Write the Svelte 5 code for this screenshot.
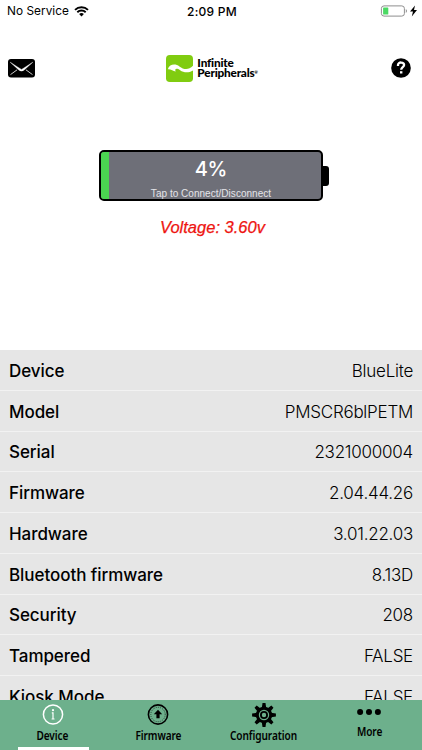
<script lang="ts">
  type Tab = "device" | "firmware" | "configuration" | "more";

  const rows = [
    { label: "Device", value: "BlueLite" },
    { label: "Model", value: "PMSCR6blPETM" },
    { label: "Serial", value: "2321000004" },
    { label: "Firmware", value: "2.04.44.26" },
    { label: "Hardware", value: "3.01.22.03" },
    { label: "Bluetooth firmware", value: "8.13D" },
    { label: "Security", value: "208" },
    { label: "Tampered", value: "FALSE" },
    { label: "Kiosk Mode", value: "FALSE" },
  ];

  const tabs: { id: Tab; label: string }[] = [
    { id: "device", label: "Device" },
    { id: "firmware", label: "Firmware" },
    { id: "configuration", label: "Configuration" },
    { id: "more", label: "More" },
  ];

  const charge = 4;
  const teeth = [0, 45, 90, 135, 180, 225, 270, 315];

  let activeTab = $state<Tab>("device");
  let connected = $state(true);
</script>

<div class="screen">
  <div class="status-bar">
    <div class="carrier">
      <span>No Service</span>
      <svg width="15" height="11" viewBox="0 0 15 11">
        <path d="M1 3.9a9.3 9.3 0 0 1 13 0M3.3 6.2a6 6 0 0 1 8.4 0" fill="none" stroke="#000" stroke-width="1.9" />
        <path d="M5.1 8.1a3.5 3.5 0 0 1 4.8 0L7.5 10.6Z" />
      </svg>
    </div>
    <div class="time">2:09 PM</div>
    <div class="power">
      <svg width="37" height="13" viewBox="0 0 37 13">
        <rect x="1.4" y=".9" width="23" height="10.2" rx="2.6" fill="#fff" stroke="#8e8e8e" />
        <rect x="3.1" y="2.5" width="5.2" height="7" rx=".6" fill="#4cd964" />
        <path d="M25.8 4q2.3 2 0 4Z" fill="#888" />
        <path d="m35 .4-5 6.1h3l-1.2 4.9 5.2-6.5h-3Z" />
      </svg>
    </div>
  </div>

  <header>
    <button class="icon-btn" aria-label="Mail">
      <svg width="27" height="19" viewBox="0 0 27 19">
        <rect width="27" height="18.5" rx="3" />
        <path d="m2.2 3.2 8.9 8q2.4 1.8 4.8 0l8.9-8-8.9 5.8-2.4 1.4-2.4-1.4Z" fill="#fff" stroke="#fff" stroke-width=".4" />
        <path d="m2.5 15.6 6.6-4.8M24.5 15.6l-6.6-4.8" fill="none" stroke="#fff" stroke-width=".8" />
      </svg>
    </button>
    <div class="brand">
      <svg width="27" height="27" viewBox="0 0 27 27">
        <rect width="27" height="27" rx="3.8" fill="#80cc10" />
        <path d="M1.8 14.2C3.6 8.8 9.6 8.6 13.4 11.4c4.3 3.1 8.9 4 13.6-.6v4.6c-4.3 2.6-9.2 2.4-12.9-.2-3.3-2.3-5.9-1.6-4.4 1.4-2.6-.8-4.7-2.6-7.9-2.4Z" fill="#fff" />
      </svg>
      <div class="brand-name">
        <span>Infinite</span>
        <span>Peripherals<small>®</small></span>
      </div>
    </div>
    <button class="icon-btn" aria-label="Help">
      <svg width="20" height="20" viewBox="0 0 20 20">
        <circle cx="10" cy="10" r="9.8" />
        <path d="M7 7.9V7c0-3.4 6.1-3.2 6.1 0 0 2.1-2.9 2.3-2.9 4.7" fill="none" stroke="#fff" stroke-width="2.3" />
        <rect x="9" y="13.2" width="2.4" height="2.3" fill="#fff" />
      </svg>
    </button>
  </header>

  <section class="battery-area">
    <button class="battery" onclick={() => (connected = !connected)}>
      <span class="battery-body">
        <span class="charge" style="width: {charge}%"></span>
        <span class="percent">{charge}%</span>
        <span class="hint">Tap to Connect/Disconnect</span>
      </span>
      <span class="battery-cap"></span>
    </button>
    <div class="voltage">Voltage: 3.60v</div>
  </section>

  <section class="details">
    {#each rows as row}
      <div class="row">
        <span class="label">{row.label}</span>
        <span class="value">{row.value}</span>
      </div>
    {/each}
  </section>

  <nav>
    {#each tabs as tab}
      <button
        class="tab {tab.id}"
        class:active={activeTab === tab.id}
        onclick={() => (activeTab = tab.id)}
      >
        {#if tab.id === "device"}
          <svg width="24" height="24" viewBox="0 0 24 24">
            <circle cx="12" cy="11.5" r="9.6" fill="none" stroke="currentColor" stroke-width="1.5" />
            <circle cx="12" cy="7.2" r="1.1" fill="currentColor" />
            <path d="M10.8 9.8H12v6M10.6 16h2.9" fill="none" stroke="currentColor" stroke-width="1.2" />
          </svg>
        {:else if tab.id === "firmware"}
          <svg width="24" height="24" viewBox="0 0 24 24">
            <circle cx="12" cy="11.5" r="9.6" fill="none" stroke="currentColor" stroke-width="1.6" />
            <circle cx="12" cy="11.5" r="7.2" fill="none" stroke="currentColor" stroke-width=".7" stroke-dasharray=".8 1.2" />
            <path d="m12 6.7 4.2 4.5h-2.6v4h-3.2v-4H7.8Z" fill="currentColor" />
          </svg>
        {:else if tab.id === "configuration"}
          <svg width="24" height="24" viewBox="0 0 24 24">
            {#each teeth as angle}
              <path d="M9.8 5 10.5.1h3L14.2 5Z" transform="rotate({angle} 12 12)" fill="currentColor" />
            {/each}
            <circle cx="12" cy="12" r="6.7" fill="none" stroke="currentColor" stroke-width="3" />
            <circle cx="12" cy="12" r="3.1" fill="none" stroke="currentColor" stroke-width="1.8" />
          </svg>
        {:else}
          <svg width="24" height="24" viewBox="0 0 24 24">
            <circle cx="3.1" cy="12" r="3" />
            <circle cx="12" cy="12" r="3" />
            <circle cx="20.9" cy="12" r="3" />
          </svg>
        {/if}
        <span class="tab-label">{tab.label}</span>
      </button>
    {/each}
  </nav>
</div>

<style>
  :global(body) {
    background: #fff;
  }

  .screen {
    display: flex;
    flex-direction: column;
    width: 422px;
    height: 750px;
    overflow: hidden;
    color: #000;
    font-family: Inter, "Liberation Sans", sans-serif;
  }

  svg {
    display: block;
    flex: none;
  }

  button {
    border: 0;
    padding: 0;
    background: none;
    color: inherit;
    font: inherit;
    cursor: pointer;
  }

  .status-bar {
    display: grid;
    grid-template-columns: 1fr auto 1fr;
    align-items: center;
    box-sizing: border-box;
    height: 22px;
    padding: 0 5px 0 7px;
    font-size: 11.8px;
    letter-spacing: 0.05px;
  }

  .carrier {
    display: flex;
    align-items: center;
    gap: 5px;
  }

  .time {
    font-weight: 500;
    font-size: 12px;
    letter-spacing: 0.25px;
  }

  .power {
    display: flex;
    justify-content: flex-end;
  }

  header {
    display: flex;
    align-items: center;
    justify-content: space-between;
    height: 92px;
    padding: 0 11px 0 8px;
  }

  .brand {
    display: flex;
    align-items: center;
    gap: 4px;
    margin-right: 2px;
  }

  .brand-name {
    display: flex;
    flex-direction: column;
    font-family: Lato, "Open Sans", sans-serif;
    font-size: 11.8px;
    line-height: 10px;
    font-weight: 900;
    letter-spacing: -0.2px;
  }

  .brand-name small {
    font-size: 4px;
    line-height: 1;
    vertical-align: 3px;
  }

  .battery-area {
    display: flex;
    flex-direction: column;
    align-items: center;
    height: 200px;
    padding-top: 36px;
    box-sizing: border-box;
  }

  .battery {
    display: flex;
    align-items: center;
    margin-left: 6px;
  }

  .battery-body {
    position: relative;
    display: flex;
    flex-direction: column;
    align-items: center;
    box-sizing: border-box;
    width: 224px;
    height: 51px;
    border: 2px solid #000;
    border-radius: 5px;
    overflow: hidden;
    background: #6e6f78;
    color: #fff;
  }

  .charge {
    position: absolute;
    left: -1px;
    top: 0;
    bottom: 0;
    background: #4bd451;
  }

  .percent {
    margin-top: 5px;
    font-size: 20px;
    line-height: 24px;
    font-weight: 450;
    letter-spacing: -0.3px;
  }

  .hint {
    margin-top: 7px;
    color: #e4e4e8;
    font-family: "Liberation Sans", sans-serif;
    font-size: 10px;
    line-height: 12px;
    letter-spacing: 0.03px;
    white-space: nowrap;
  }

  .battery-cap {
    width: 6px;
    height: 20px;
    border-radius: 0 3px 3px 0;
    background: #000;
  }

  .voltage {
    margin: 16px 0 0 3px;
    color: #ee1410;
    font-family: "Liberation Sans", sans-serif;
    font-size: 16.5px;
    line-height: 20px;
    font-style: italic;
    -webkit-text-stroke: 0.25px #ee1410;
  }

  .details {
    flex: 1;
    min-height: 0;
    margin-top: 36px;
    overflow: hidden;
    background: #e6e6e6;
  }

  .row {
    display: flex;
    align-items: center;
    justify-content: space-between;
    box-sizing: border-box;
    height: 40.75px;
    padding: 2px 9px 0;
    border-bottom: 1px solid #f2f2f2;
    font-size: 17px;
  }

  .label {
    font-weight: 500;
    letter-spacing: -0.06px;
  }

  .value {
    font-weight: 300;
    letter-spacing: -0.25px;
  }

  nav {
    display: grid;
    grid-template-columns: repeat(4, 1fr);
    flex: none;
    height: 50px;
    background: #6db08c;
  }

  .tab {
    position: relative;
    display: flex;
    flex-direction: column;
    align-items: center;
    padding-top: 3px;
  }

  .tab-label {
    margin-top: 2px;
    font-family: "Noto Sans", "Open Sans", sans-serif;
    font-size: 11.6px;
    line-height: 14px;
    font-weight: 600;
    letter-spacing: -0.1px;
    transform: scaleX(0.87);
  }

  .tab.more {
    padding-top: 0;
  }

  .tab.more .tab-label {
    margin-top: 1px;
  }

  .tab.active svg {
    color: #fff;
  }

  .tab.active::after {
    content: "";
    position: absolute;
    left: 18px;
    right: 17px;
    bottom: 0;
    height: 3px;
    background: #fff;
  }
</style>
